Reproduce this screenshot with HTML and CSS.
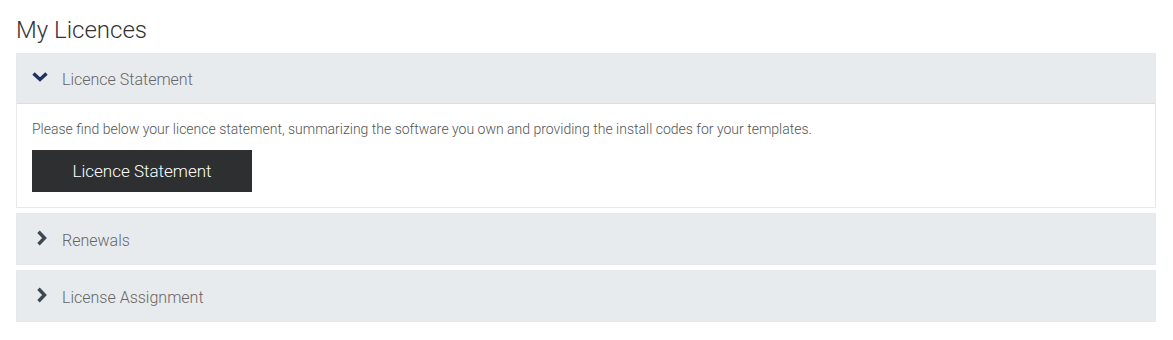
FILE: index.html
```html
<!DOCTYPE html>
<html lang="en">
<head>
    <meta charset="UTF-8">
    <meta name="viewport" content="width=device-width, initial-scale=1.0">
    <title>My Licences</title>
    <link rel="stylesheet" href="styles.css">
</head>
<body>
    <div class="container">
        <h1 class="page-title">My Licences</h1>

        <div class="panel open">
            <div class="panel-heading">
                <svg class="chevron down" width="16" height="10" viewBox="0 0 16 10">
                    <path d="M1.5 1.5 L8 7.5 L14.5 1.5" fill="none" stroke="currentColor" stroke-width="3.4"/>
                </svg>
                <span class="panel-title">Licence Statement</span>
            </div>
            <div class="panel-body">
                <p>Please find below your licence statement, summarizing the software you own and providing the install codes for your templates.</p>
                <button class="statement-button">Licence Statement</button>
            </div>
        </div>

        <div class="panel">
            <div class="panel-heading">
                <svg class="chevron right" width="16" height="16" viewBox="0 0 16 16">
                    <path d="M4.5 1.8 L10.5 8 L4.5 14.2" fill="none" stroke="currentColor" stroke-width="3.4"/>
                </svg>
                <span class="panel-title">Renewals</span>
            </div>
        </div>

        <div class="panel">
            <div class="panel-heading">
                <svg class="chevron right" width="16" height="16" viewBox="0 0 16 16">
                    <path d="M4.5 1.8 L10.5 8 L4.5 14.2" fill="none" stroke="currentColor" stroke-width="3.4"/>
                </svg>
                <span class="panel-title">License Assignment</span>
            </div>
        </div>
    </div>
</body>
</html>
```

FILE: styles.css
```css
body {
    margin: 0;
    background-color: #fff;
    font-family: Roboto, 'Liberation Sans', sans-serif;
    color: #333;
}

.container {
    width: 1140px;
    padding: 13px 16px;
}

.page-title {
    font-size: 24px;
    font-weight: 300;
    line-height: 34px;
    margin: 0 0 6px;
    color: #333;
}

.panel {
    margin-bottom: 5px;
    border: 1px solid #e6e8eb;
}

.panel-heading {
    display: flex;
    align-items: center;
    height: 50px;
    padding: 0 15px;
    background-color: #e8ebee;
}

.panel.open .panel-heading {
    border-bottom: 1px solid #dcdfe2;
    height: 49px;
}

.chevron {
    width: 16px;
    margin-right: 14px;
}

.chevron.down {
    color: #1f3160;
    height: 10px;
    margin-top: -3px;
}

.chevron.right {
    color: #3d4852;
    height: 16px;
    margin-top: -2px;
    margin-left: 2px;
    margin-right: 12px;
}

.panel-title {
    padding-top: 2px;
    font-size: 16px;
    font-weight: 300;
    color: #666;
}

.panel-body {
    background-color: #fff;
    padding: 16px 15px 15px;
}

.panel-body p {
    margin: 0 0 11px;
    font-size: 14px;
    line-height: 19px;
    font-weight: 300;
    color: #555;
}

.statement-button {
    display: block;
    width: 220px;
    height: 42px;
    border: none;
    background-color: #2d2f30;
    color: #fff;
    font-family: Roboto, 'Liberation Sans', sans-serif;
    font-size: 17px;
    font-weight: 300;
    cursor: pointer;
}
```
